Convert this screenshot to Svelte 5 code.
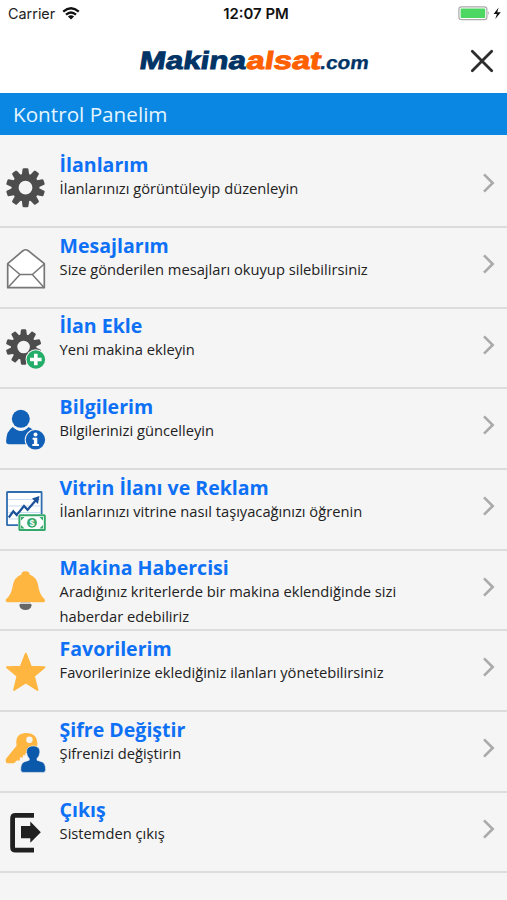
<script>
	const items = [
		{ icon: 'gear', title: 'İlanlarım', text: 'İlanlarınızı görüntüleyip düzenleyin' },
		{ icon: 'mail', title: 'Mesajlarım', text: 'Size gönderilen mesajları okuyup silebilirsiniz' },
		{ icon: 'add', title: 'İlan Ekle', text: 'Yeni makina ekleyin' },
		{ icon: 'info', title: 'Bilgilerim', text: 'Bilgilerinizi güncelleyin' },
		{ icon: 'chart', title: 'Vitrin İlanı ve Reklam', text: 'İlanlarınızı vitrine nasıl taşıyacağınızı öğrenin' },
		{ icon: 'bell', title: 'Makina Habercisi', text: 'Aradığınız kriterlerde bir makina eklendiğinde sizi haberdar edebiliriz' },
		{ icon: 'star', title: 'Favorilerim', text: 'Favorilerinize eklediğiniz ilanları yönetebilirsiniz' },
		{ icon: 'key', title: 'Şifre Değiştir', text: 'Şifrenizi değiştirin' },
		{ icon: 'exit', title: 'Çıkış', text: 'Sistemden çıkış' }
	];

	const teeth = [0, 36, 72, 108, 144, 180, 216, 252, 288, 324];
</script>

{#snippet gear()}
	<circle r="10.4" fill="none" stroke="#4d4d4d" stroke-width="7" />
	{#each teeth as angle}
		<path d="M-3.8-12 -2.9-18.7Q-2.6-19.5-1.8-19.5H1.8Q2.6-19.5 2.9-18.7L3.8-12Z" fill="#4d4d4d" transform="rotate({angle})" />
	{/each}
{/snippet}

<div class="screen">
	<div class="status">
		<div class="carrier">
			<span>Carrier</span>
			<svg width="18" height="13" viewBox="0 0 18 13">
				<g fill="none" stroke="#111" stroke-width="2.3">
					<path d="M1.2 4.6Q9-2.2 16.8 4.6" />
					<path d="M4 7.7Q9 3.3 14 7.7" />
				</g>
				<path d="M5.9 9.5Q9 7 12.1 9.5L9 12.6Z" fill="#111" />
			</svg>
		</div>
		<span class="time">12:07 PM</span>
		<div class="battery">
			<svg width="44" height="15" viewBox="0 0 44 15">
				<rect x=".9" y=".9" width="28" height="12.8" rx="2.6" fill="#fff" stroke="#aaa" stroke-width="1.2" />
				<rect x="2.6" y="2.5" width="24.6" height="9.6" rx="1" fill="#4cd763" />
				<path d="M30.2 5.2Q32 7.2 30.2 9.2Z" fill="#999" />
				<path d="M40.6 1.6 35.6 8H38.9L37.3 13 42.8 6.2H39.3Z" fill="#111" />
			</svg>
		</div>
	</div>

	<header>
		<svg class="logo" width="240" height="44" viewBox="0 0 240 44">
			<g transform="translate(3.5 31.3) skewX(-9)" font-family="Liberation Sans" font-weight="bold">
				<text x="0" y="0" font-size="25" textLength="106.5" lengthAdjust="spacingAndGlyphs" fill="#003366" stroke="#003366" stroke-width=".9">Makina</text>
				<text x="107" y="0" font-size="25" textLength="74.5" lengthAdjust="spacingAndGlyphs" fill="#ff6000" stroke="#ff6000" stroke-width=".9">alsat</text>
				<text x="181" y="0" font-size="18.5" textLength="48.5" lengthAdjust="spacingAndGlyphs" fill="#003366" stroke="#003366" stroke-width=".3">.com</text>
			</g>
		</svg>
		<button class="close" aria-label="Kapat">
			<svg width="24" height="24" viewBox="0 0 24 24">
				<path d="M2.3 2.3 21.7 21.7M21.7 2.3 2.3 21.7" stroke="#2d2d2d" stroke-width="2.8" stroke-linecap="round" />
			</svg>
		</button>
	</header>

	<h1>Kontrol Panelim</h1>

	<ul>
		{#each items as item}
			<li>
				<svg class="icon" width="40" height="40" viewBox="0 0 40 40">
					{#if item.icon === 'gear'}
						<g transform="translate(19.5 19.7)">{@render gear()}</g>
					{:else if item.icon === 'mail'}
						<path d="M1.7 14.7 17 1.7Q19.6-.2 22.2 1.7L38.3 14.7V38.7H1.7Z" fill="#fff" stroke="#777" stroke-width="1.7" stroke-linejoin="round" />
						<path d="M1.7 15 14 25.5H26.3L38.3 15M14 25.5 2 38.5M26.3 25.5 38 38.5" fill="none" stroke="#777" stroke-width="1.5" />
					{:else if item.icon === 'add'}
						<g transform="translate(17.6 18) scale(.91)">{@render gear()}</g>
						<circle cx="29.8" cy="30.5" r="10.2" fill="#f5f5f5" />
						<circle cx="29.8" cy="30.5" r="9.3" fill="#24ad68" />
						<path d="M29.8 24.7V36.3M24 30.5H35.6" stroke="#fff" stroke-width="3.6" />
					{:else if item.icon === 'info'}
						<circle cx="14.8" cy="8.8" r="9" fill="#1261b8" />
						<path d="M6.8 17Q15 25 22.6 17Q27 19 29 22V34.3H3Q0 34.3 .1 31Q.4 21 6.8 17Z" fill="#1261b8" />
						<circle cx="29.4" cy="29.8" r="10.7" fill="#f5f5f5" />
						<circle cx="29.4" cy="29.8" r="9.7" fill="#1261b8" />
						<circle cx="29.5" cy="24.6" r="2" fill="#fff" />
						<path d="M26.6 27.8H31.3V34H32.9V36H26.3V34H27.9V29.8H26.6Z" fill="#fff" />
					{:else if item.icon === 'chart'}
						<rect x="1" y="1" width="34.6" height="33.2" rx=".5" fill="#fff" stroke="#2f6daf" stroke-width="1.8" />
						<path d="M2.5 8.5H34M2.5 15H34M2.5 21.5H34M2.5 28H34" stroke="#c5dcf2" stroke-width="1.2" />
						<path d="M2.8 26.5 7.3 20.3 10.7 24 18 15 21.6 18.8 30.5 8.5" fill="none" stroke="#1c5299" stroke-width="2.2" />
						<path d="M33.4 4.9 26 7.5 32 13Z" fill="#1c5299" />
						<rect x="12" y="23.2" width="28" height="17" fill="#f5f5f5" />
						<rect x="13.4" y="24.3" width="25.4" height="14.8" rx=".6" fill="#fff" stroke="#35a96c" stroke-width="2" />
						<path d="M15 26H18.6L15 29.6ZM37 26V29.6L33.4 26ZM15 37.6V34L18.6 37.6ZM37 37.6H33.4L37 34Z" fill="#35a96c" />
						<circle cx="26" cy="31.8" r="4.9" fill="#35a96c" />
						<text x="26" y="35" font-family="Liberation Sans" font-size="9" font-weight="bold" text-anchor="middle" fill="#fff">$</text>
					{:else if item.icon === 'bell'}
						<ellipse cx="19.5" cy="34.2" rx="6" ry="4.9" fill="#666" />
						<path d="M15.4 3.4Q15.5.3 19.5.3T23.6 3.4Q31 6 32.3 15Q33.4 23.5 38.8 28.4Q39.8 31 37 31.2H2Q-.8 31-.2 28.4Q5.6 23.5 6.7 15Q8 6 15.4 3.4Z" fill="#ffb641" />
						<path d="M12.8 32.1H26.2" stroke="#f5f5f5" stroke-width="1.4" />
					{:else if item.icon === 'star'}
						<path d="M19.8 1.6 24.9 14.6 38.5 15.2 28 24.1 31.5 38 19.8 30.4 8 38 11.4 24.1 .9 15.2 14.7 14.6Z" fill="#ffb641" stroke="#ffb641" stroke-width="1.8" stroke-linejoin="round" />
					{:else if item.icon === 'key'}
						<path d="M10.6 12.7Q8.4 0 20.8-.1Q31.4.4 31.4 10.5Q31 20 19 20.3L19.4 22.2H16.8L17 24.6H13.8V27.4H10.8L8 30.2H2Q-.7 31-.2 26Z" fill="#ffb641" />
						<circle cx="23.4" cy="6.8" r="3.2" fill="#f5f5f5" />
						<path d="M27.2 13C22.6 13 20.2 15.6 20.6 19.4Q21 23.7 23.2 25.6V27.2L18 28.9Q14.7 30.5 14.7 36.5Q14.7 39.4 17 39.4H37.4Q39.6 39.4 39.6 36.5Q39.6 30.5 36.2 28.9L31 27.2V25.6Q33.4 23.7 33.8 19.4C34.2 15.6 31.8 13 27.2 13Z" fill="#0b59aa" stroke="#f5f5f5" stroke-width=".6" />
					{:else}
						<path d="M28 2.4H9.6Q6.6 2.4 6.6 5.4V34.2Q6.6 37.2 9.6 37.2H28" fill="none" stroke="#202020" stroke-width="4.8" />
						<path d="M15 13.1H24.3V8.6L34.8 19.2 24.3 29.8V25.3H15Z" fill="#202020" />
					{/if}
				</svg>
				<div class="body">
					<h2>{item.title}</h2>
					<p>{item.text}</p>
				</div>
				<svg class="arrow" width="14" height="22" viewBox="0 0 14 22">
					<path d="M2 2.4 10.7 11 2 19.6" fill="none" stroke="#aaa" stroke-width="2.6" />
				</svg>
			</li>
		{/each}
	</ul>
</div>

<style>
	:global(body) {
		margin: 0;
		background: #f5f5f5;
	}
	.screen {
		height: 900px;
		overflow: hidden;
		background: #f5f5f5;
		font-family: 'Open Sans', sans-serif;
	}
	.status {
		display: grid;
		grid-template-columns: 1fr auto 1fr;
		align-items: center;
		height: 27px;
		padding: 0 5px 0 8px;
		background: #fff;
		font-family: Inter, sans-serif;
		font-size: 14.4px;
		color: #222;
	}
	.carrier {
		display: flex;
		align-items: center;
		gap: 7px;
	}
	.time {
		padding-left: 2px;
		font-weight: 600;
		font-size: 14.9px;
		color: #111;
	}
	.battery {
		display: flex;
		justify-content: flex-end;
	}
	.battery svg {
		display: block;
		margin-top: -1px;
	}
	header {
		display: flex;
		align-items: center;
		justify-content: flex-end;
		height: 66px;
		background: #fff;
	}
	.logo {
		margin-right: 95px;
	}
	.close {
		display: flex;
		padding: 0;
		margin: 2px 13px 0 0;
		border: 0;
		background: none;
	}
	h1 {
		height: 42px;
		margin: 0;
		padding-left: 13px;
		background: #0987e2;
		color: #e4f5ff;
		font-size: 20.7px;
		font-weight: 400;
		line-height: 42px;
	}
	ul {
		margin: 0;
		padding: 12.3px 0 0;
		list-style: none;
	}
	li {
		display: flex;
		align-items: flex-start;
		box-sizing: border-box;
		height: 80.67px;
		border-bottom: 2px solid #dcdcdc;
	}
	.icon {
		flex: none;
		margin: 20.8px 14px 0 5.6px;
		overflow: visible;
	}
	.body {
		flex: 1;
		padding-top: 4.7px;
	}
	h2 {
		margin: 0;
		color: #0d70f5;
		font-size: 19.55px;
		font-weight: 700;
		line-height: 26px;
	}
	p {
		width: 360px;
		margin: -1.9px 0 0;
		color: #222;
		font-size: 14.7px;
		line-height: 24.2px;
	}
	.arrow {
		margin: 25px 11px 0 0;
	}
</style>
